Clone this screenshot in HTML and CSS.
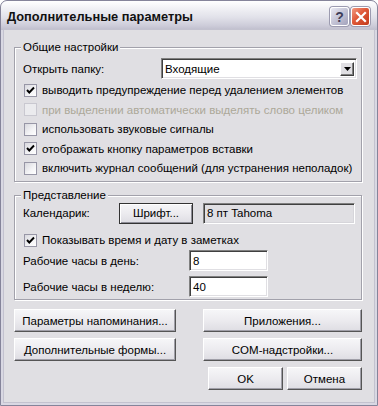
FILE: index.html
```html
<!DOCTYPE html>
<html lang="ru">
<head>
<meta charset="utf-8">
<title>Дополнительные параметры</title>
<link rel="stylesheet" href="styles.css">
</head>
<body>
<div class="window">
  <div class="titlebar">
    <span class="title">Дополнительные параметры</span>
    <div class="caption-btns">
      <span class="cbtn help">?</span>
      <span class="cbtn close"><svg width="12" height="12" viewBox="0 0 12 12"><path d="M2 2 L10 10 M10 2 L2 10" stroke="#fff" stroke-width="2.2" stroke-linecap="square" fill="none"/></svg></span>
    </div>
  </div>
  <div class="client">
    <div class="group g1">
      <span class="group-title">Общие настройки</span>
      <div class="folder-row">
        <span class="folder-lbl">Открыть папку:</span>
        <div class="select">
          <span class="select-text">Входящие</span>
          <span class="select-btn"><svg width="7" height="4" viewBox="0 0 7 4"><path d="M0 0 H7 L3.5 4 Z" fill="#000"/></svg></span>
        </div>
      </div>
      <div class="checks">
        <div class="check"><span class="box"><svg width="11" height="11" viewBox="0 0 11 11"><path d="M2 5 L4.3 7.5 L9 2.5" stroke="#000" stroke-width="1.9" fill="none"/></svg></span><span>выводить предупреждение перед удалением элементов</span></div>
        <div class="check disabled"><span class="box"></span><span>при выделении автоматически выделять слово целиком</span></div>
        <div class="check"><span class="box"></span><span>использовать звуковые сигналы</span></div>
        <div class="check"><span class="box"><svg width="11" height="11" viewBox="0 0 11 11"><path d="M2 5 L4.3 7.5 L9 2.5" stroke="#000" stroke-width="1.9" fill="none"/></svg></span><span>отображать кнопку параметров вставки</span></div>
        <div class="check"><span class="box"></span><span>включить журнал сообщений (для устранения неполадок)</span></div>
      </div>
    </div>

    <div class="group g2">
      <span class="group-title">Представление</span>
      <div class="cal-row">
        <span class="cal-lbl">Календарик:</span>
        <span class="btn font-btn">Шрифт...</span>
        <span class="font-field">8 пт Tahoma</span>
      </div>
      <div class="check show-row"><span class="box"><svg width="11" height="11" viewBox="0 0 11 11"><path d="M2 5 L4.3 7.5 L9 2.5" stroke="#000" stroke-width="1.9" fill="none"/></svg></span><span>Показывать время и дату в заметках</span></div>
      <div class="hours-row">
        <span class="hours-lbl">Рабочие часы в день:</span>
        <span class="input">8</span>
      </div>
      <div class="hours-row second">
        <span class="hours-lbl">Рабочие часы в неделю:</span>
        <span class="input">40</span>
      </div>
    </div>

    <div class="btn-grid">
      <span class="btn">Параметры напоминания...</span>
      <span class="btn">Приложения...</span>
      <span class="btn">Дополнительные формы...</span>
      <span class="btn">COM-надстройки...</span>
    </div>
    <div class="ok-row">
      <span class="btn small">OK</span>
      <span class="btn small">Отмена</span>
    </div>
  </div>
</div>
</body>
</html>
```

FILE: styles.css
```css
html, body {
  margin: 0;
  padding: 0;
  background: #fff;
}

body {
  font-family: "Liberation Sans", Arial, sans-serif;
  font-size: 11.5px;
  color: #000;
}

.window {
  width: 378px;
  height: 406px;
  box-sizing: border-box;
  border: 1px solid #85849a;
  border-radius: 7px 7px 0 0;
  background: #d9d8e3;
  padding: 0 3px 3px 3px;
  display: flex;
  flex-direction: column;
  overflow: hidden;
}

.titlebar {
  height: 29px;
  margin: 0 -3px;
  padding: 0 7px 0 6px;
  display: flex;
  align-items: center;
  justify-content: space-between;
  background: linear-gradient(#ffffff 0%, #f1f1f5 25%, #e2e2ea 55%, #cdccd9 85%, #bebdcc 100%);
  border-radius: 6px 6px 0 0;
}

.title {
  font-family: "Liberation Sans", Arial, sans-serif;
  font-weight: bold;
  font-size: 12.8px;
  color: #111;
  padding-top: 2px;
}

.caption-btns {
  display: flex;
  gap: 2px;
  padding-top: 2px;
}

.cbtn {
  width: 19px;
  height: 19px;
  box-sizing: border-box;
  border: 1px solid #fff;
  border-radius: 3px;
  display: flex;
  align-items: center;
  justify-content: center;
  box-shadow: 0 0 0 1px #9c9bb0;
}

.help {
  background: linear-gradient(135deg, #e8e8f2 0%, #c4c4d6 50%, #a3a3bc 100%);
  color: #3d3d58;
  font-weight: bold;
  font-size: 14px;
  font-family: "Liberation Sans", Arial, sans-serif;
}

.close {
  background: linear-gradient(135deg, #f29a82 0%, #df5838 45%, #c33a1c 100%);
}

.client {
  flex: 1;
  background: #e0dfe3;
  box-shadow: 0 0 0 1px #c3c2cf;
  padding: 17px 12px 0 10px;
  display: flex;
  flex-direction: column;
}

.group {
  position: relative;
  border: 1px solid #a2a1ab;
  box-shadow: inset 1px 1px 0 #fff, 1px 1px 0 #fff;
  padding-left: 8px;
}

.group-title {
  position: absolute;
  top: -7px;
  left: 6px;
  padding: 0 2px;
  line-height: 13px;
  background: #e0dfe3;
}

.g1 {
  padding-top: 10px;
  padding-bottom: 3.25px;
}

.folder-row {
  height: 21px;
  display: flex;
  align-items: center;
}

.folder-lbl {
  width: 138px;
}

.select {
  width: 196px;
  height: 21px;
  box-sizing: border-box;
  background: #fff;
  border: 1px solid;
  border-color: #808080 #fff #fff #808080;
  box-shadow: inset 1px 1px 0 #404040, inset -1px -1px 0 #e0dfe3;
  display: flex;
  align-items: center;
  justify-content: space-between;
  padding: 0 2px 0 3px;
}

.select-btn {
  width: 14px;
  height: 14px;
  box-sizing: border-box;
  background: #e0dfe3;
  border: 1px solid;
  border-color: #fff #404040 #404040 #fff;
  box-shadow: inset -1px -1px 0 #808080;
  display: flex;
  align-items: center;
  justify-content: center;
}

.checks {
  margin-top: 1.25px;
}

.check {
  height: 19.5px;
  display: flex;
  align-items: center;
}

.box {
  width: 13px;
  height: 13px;
  box-sizing: border-box;
  margin-left: 1px;
  margin-right: 5px;
  border: 1px solid #9796a6;
  background: linear-gradient(135deg, #d8d8de 0%, #f4f4f6 60%, #ffffff 100%);
  display: flex;
  align-items: center;
  justify-content: center;
  flex: none;
}

.check.disabled {
  color: #aca899;
}

.check.disabled .box {
  border-color: #c9c8d0;
  background: #ebebee;
}

.g2 {
  margin-top: 13px;
  padding-top: 6px;
  padding-bottom: 2px;
}

.cal-row {
  height: 22px;
  display: flex;
  align-items: center;
}

.cal-lbl {
  width: 96px;
}

.btn {
  height: 23px;
  box-sizing: border-box;
  background: linear-gradient(#f6f6f8 0%, #ecebef 50%, #dedde3 100%);
  border: 1px solid;
  border-color: #fff #555 #555 #fff;
  box-shadow: inset -1px -1px 0 #a09fa8;
  display: flex;
  align-items: center;
  justify-content: center;
}

.font-btn {
  width: 74px;
  height: 21px;
  border-color: #333;
  box-shadow: inset 1px 1px 0 #fff, inset -1px -1px 0 #8d8c96;
}

.font-field {
  width: 152px;
  height: 21px;
  margin-left: 10px;
  box-sizing: border-box;
  background: #e0dfe3;
  border: 1px solid;
  border-color: #808080 #fff #fff #808080;
  box-shadow: inset 1px 1px 0 #404040, inset -1px -1px 0 #d6d5da;
  display: flex;
  align-items: center;
  padding-left: 3px;
}

.show-row {
  margin-top: 6px;
  height: 20px;
}

.hours-row {
  height: 21px;
  display: flex;
  align-items: center;
}

.hours-row.second {
  margin-top: 5px;
}

.hours-lbl {
  width: 166px;
}

.input {
  width: 79px;
  height: 21px;
  box-sizing: border-box;
  background: #fff;
  border: 1px solid;
  border-color: #808080 #fff #fff #808080;
  box-shadow: inset 1px 1px 0 #404040, inset -1px -1px 0 #e0dfe3;
  display: flex;
  align-items: center;
  padding-left: 3px;
}

.btn-grid {
  margin-top: 9px;
  display: grid;
  grid-template-columns: 162px 159px;
  column-gap: 27px;
  row-gap: 6px;
}

.ok-row {
  margin-top: 6px;
  display: flex;
  justify-content: flex-end;
  gap: 4px;
}

.btn.small {
  width: 75px;
}
```
